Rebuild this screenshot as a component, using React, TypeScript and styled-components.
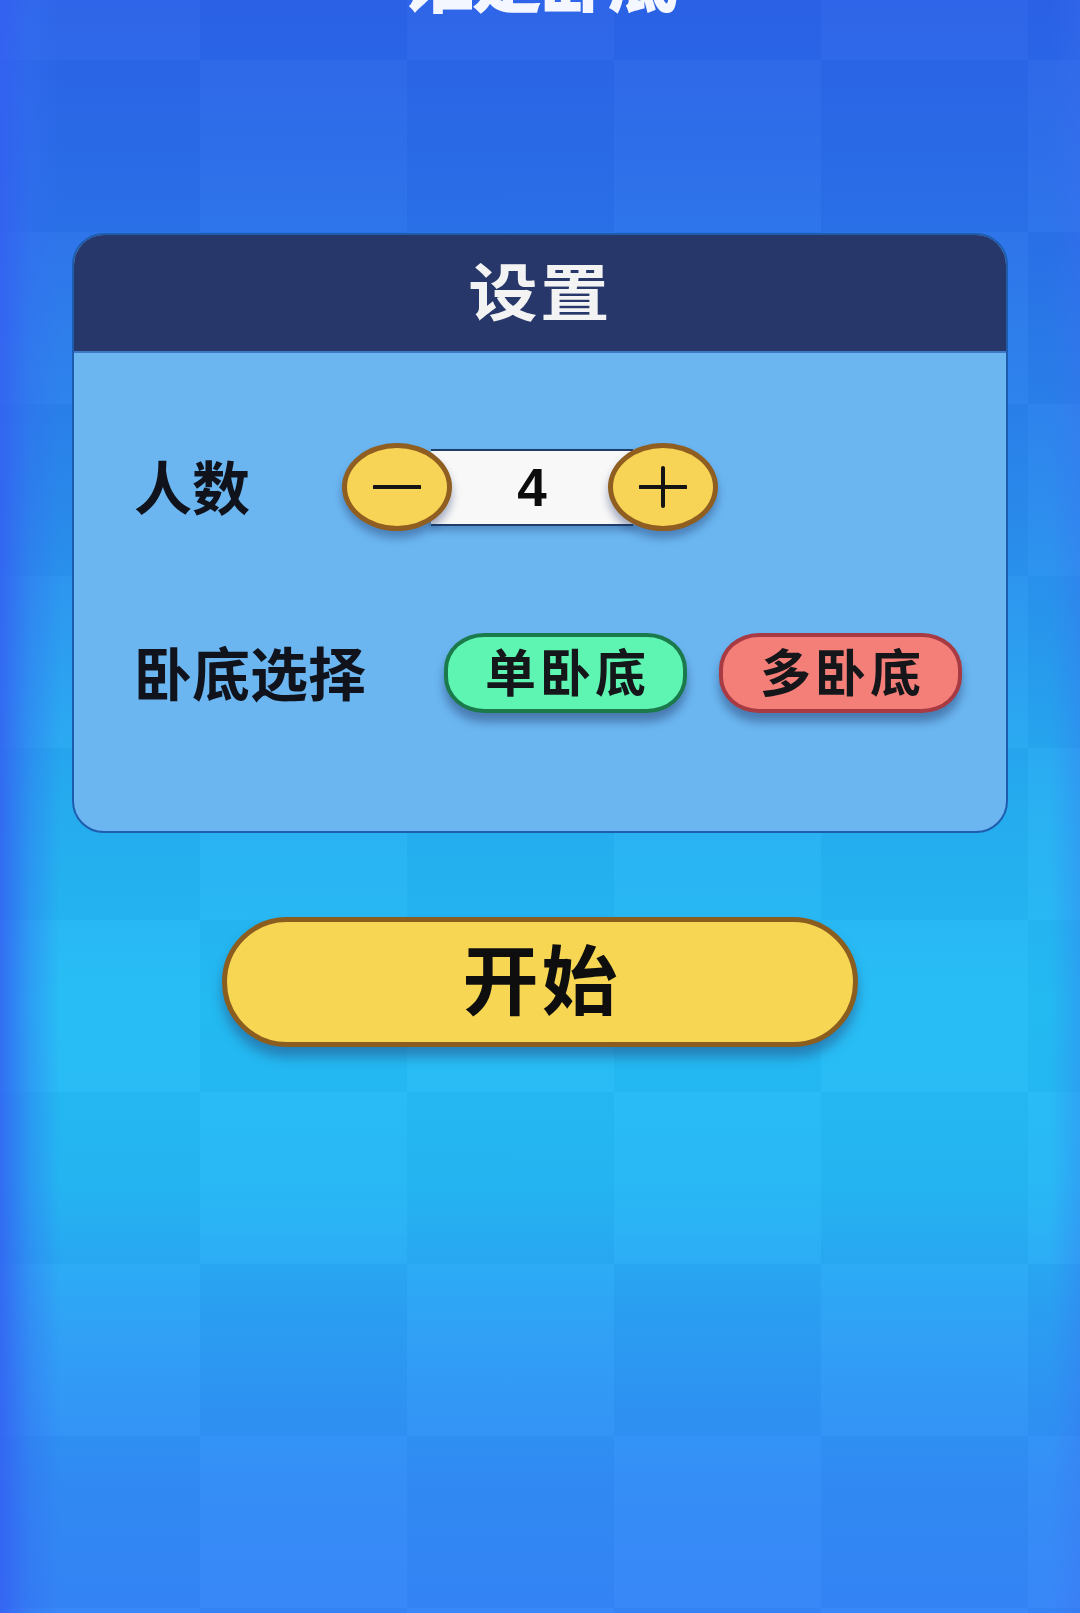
import React, { useState } from 'react';
import styled, { createGlobalStyle } from 'styled-components';

const GlobalStyle = createGlobalStyle`
  html, body {
    margin: 0;
    padding: 0;
  }
  body {
    font-family: "Noto Sans CJK SC", "Noto Sans", sans-serif;
  }
`;

const Page = styled.div`
  position: relative;
  width: 1080px;
  min-height: 1613px;
  overflow: hidden;
  display: flex;
  flex-direction: column;
  align-items: center;
  background:
    linear-gradient(90deg, rgba(52, 96, 242, 0.85) 0px, rgba(52, 110, 242, 0.4) 30px, rgba(52, 110, 242, 0) 60px, rgba(52, 110, 242, 0) 1050px, rgba(60, 110, 240, 0.3) 1080px),
    repeating-conic-gradient(rgba(255, 255, 255, 0.018) 0 25%, rgba(0, 20, 90, 0.022) 0 50%) -7px 60px / 414px 344px,
    linear-gradient(180deg, #2b62e8 0px, #2a72ea 240px, #2a8cee 520px, #26aef2 800px, #24bdf5 1000px, #25b8f5 1180px, #2c9ff5 1330px, #318cf6 1480px, #3585f8 1613px);
`;

const GameTitle = styled.h1`
  margin: -58px 0 0;
  font-size: 70px;
  line-height: 1;
  font-weight: 900;
  color: #f4f7ff;
  letter-spacing: -2px;
`;

const Panel = styled.section`
  margin-top: 221px;
  width: 936px;
  box-sizing: border-box;
  border: 2px solid #1e5cae;
  border-radius: 32px;
  overflow: hidden;
  background: #6bb6f1;
`;

const PanelHeader = styled.div`
  height: 118px;
  box-sizing: border-box;
  padding: 0 0 8px;
  display: flex;
  align-items: center;
  justify-content: center;
  background: #27376a;
  border-bottom: 2px solid #3f78c4;
`;

const HeaderText = styled.span`
  display: inline-block;
  color: #f3f3f3;
  font-size: 62px;
  font-weight: 700;
  line-height: 1;
  letter-spacing: 2px;
  transform: scaleX(1.12);
`;

const PanelBody = styled.div`
  height: 478px;
  box-sizing: border-box;
  padding: 80px 0 0 60px;
  display: flex;
  flex-direction: column;
  gap: 92px;
`;

const Row = styled.div<{ $gap: number; $height: number }>`
  display: flex;
  align-items: center;
  height: ${(p) => p.$height}px;
  gap: ${(p) => p.$gap}px;
`;

const Label = styled.span`
  font-size: 58px;
  font-weight: 700;
  color: #10131c;
  line-height: 1;
  padding-bottom: 4px;
`;

const Stepper = styled.div`
  display: flex;
  align-items: center;
`;

const RoundBtn = styled.button<{ $side: 'left' | 'right' }>`
  position: relative;
  z-index: 1;
  width: 110px;
  height: 88px;
  padding: 0;
  border-radius: 50%;
  border: 5px solid #8f5e20;
  background: #f7d455;
  box-shadow: 0 7px 9px rgba(30, 50, 100, 0.4);
  display: flex;
  align-items: center;
  justify-content: center;
  cursor: pointer;
  margin-right: ${(p) => (p.$side === 'left' ? '-21px' : '0')};
  margin-left: ${(p) => (p.$side === 'right' ? '-25px' : '0')};
`;

const CountBox = styled.div`
  width: 202px;
  height: 77px;
  box-sizing: border-box;
  border-top: 2px solid #1f3f6a;
  border-bottom: 2px solid #1f3f6a;
  background: #f8f8f8;
  box-shadow: 0 5px 7px rgba(30, 50, 100, 0.3);
  display: flex;
  align-items: center;
  justify-content: center;
  font-family: "Liberation Sans", Arial, sans-serif;
  font-weight: 700;
  font-size: 53px;
  color: #0c0c0c;
`;

const Choices = styled.div`
  display: flex;
  gap: 32px;
`;

const ChoiceBtn = styled.button<{ $fill: string; $edge: string }>`
  width: 243px;
  height: 80px;
  box-sizing: border-box;
  border-radius: 40px / 36px;
  border: 4px solid ${(p) => p.$edge};
  background: ${(p) => p.$fill};
  box-shadow: 0 9px 10px rgba(30, 50, 100, 0.45);
  font-family: "Noto Sans CJK SC", sans-serif;
  font-size: 51px;
  font-weight: 700;
  color: #14161a;
  line-height: 1;
  letter-spacing: 4px;
  padding: 0 0 6px 4px;
  cursor: pointer;
`;

const StartBtn = styled.button`
  margin-top: 84px;
  width: 636px;
  height: 130px;
  box-sizing: border-box;
  border-radius: 65px;
  border: 5px solid #8b5d1e;
  background: #f7d654;
  box-shadow: 0 10px 12px rgba(40, 60, 110, 0.45);
  font-family: "Noto Sans CJK SC", sans-serif;
  font-size: 76px;
  font-weight: 700;
  color: #0e0e0e;
  line-height: 1;
  letter-spacing: 3px;
  padding: 0 0 12px 3px;
  cursor: pointer;
`;

const Sign = ({ plus }: { plus?: boolean }) => (
  <svg width="48" height="42" viewBox="0 0 48 42">
    <line x1="1" y1="21" x2="47" y2="21" stroke="#141414" strokeWidth="4" strokeLinecap="round" />
    {plus && <line x1="24" y1="2" x2="24" y2="40" stroke="#141414" strokeWidth="4" strokeLinecap="round" />}
  </svg>
);

const App: React.FC = () => {
  const [count, setCount] = useState(4);
  const [mode, setMode] = useState<'single' | 'multi'>('single');

  return (
    <Page>
      <GlobalStyle />
      <GameTitle>谁是卧底</GameTitle>
      <Panel>
        <PanelHeader>
          <HeaderText>设置</HeaderText>
        </PanelHeader>
        <PanelBody>
          <Row $gap={92} $height={108}>
            <Label>人数</Label>
            <Stepper>
              <RoundBtn $side="left" onClick={() => setCount(Math.max(3, count - 1))}>
                <Sign />
              </RoundBtn>
              <CountBox>{count}</CountBox>
              <RoundBtn $side="right" onClick={() => setCount(count + 1)}>
                <Sign plus />
              </RoundBtn>
            </Stepper>
          </Row>
          <Row $gap={78} $height={80}>
            <Label>卧底选择</Label>
            <Choices>
              <ChoiceBtn $fill="#5df5b1" $edge="#1b7a4c" onClick={() => setMode('single')}>
                单卧底
              </ChoiceBtn>
              <ChoiceBtn $fill="#f47f78" $edge="#a83a43" onClick={() => setMode('multi')}>
                多卧底
              </ChoiceBtn>
            </Choices>
          </Row>
        </PanelBody>
      </Panel>
      <StartBtn data-mode={mode}>开始</StartBtn>
    </Page>
  );
};

export default App;
